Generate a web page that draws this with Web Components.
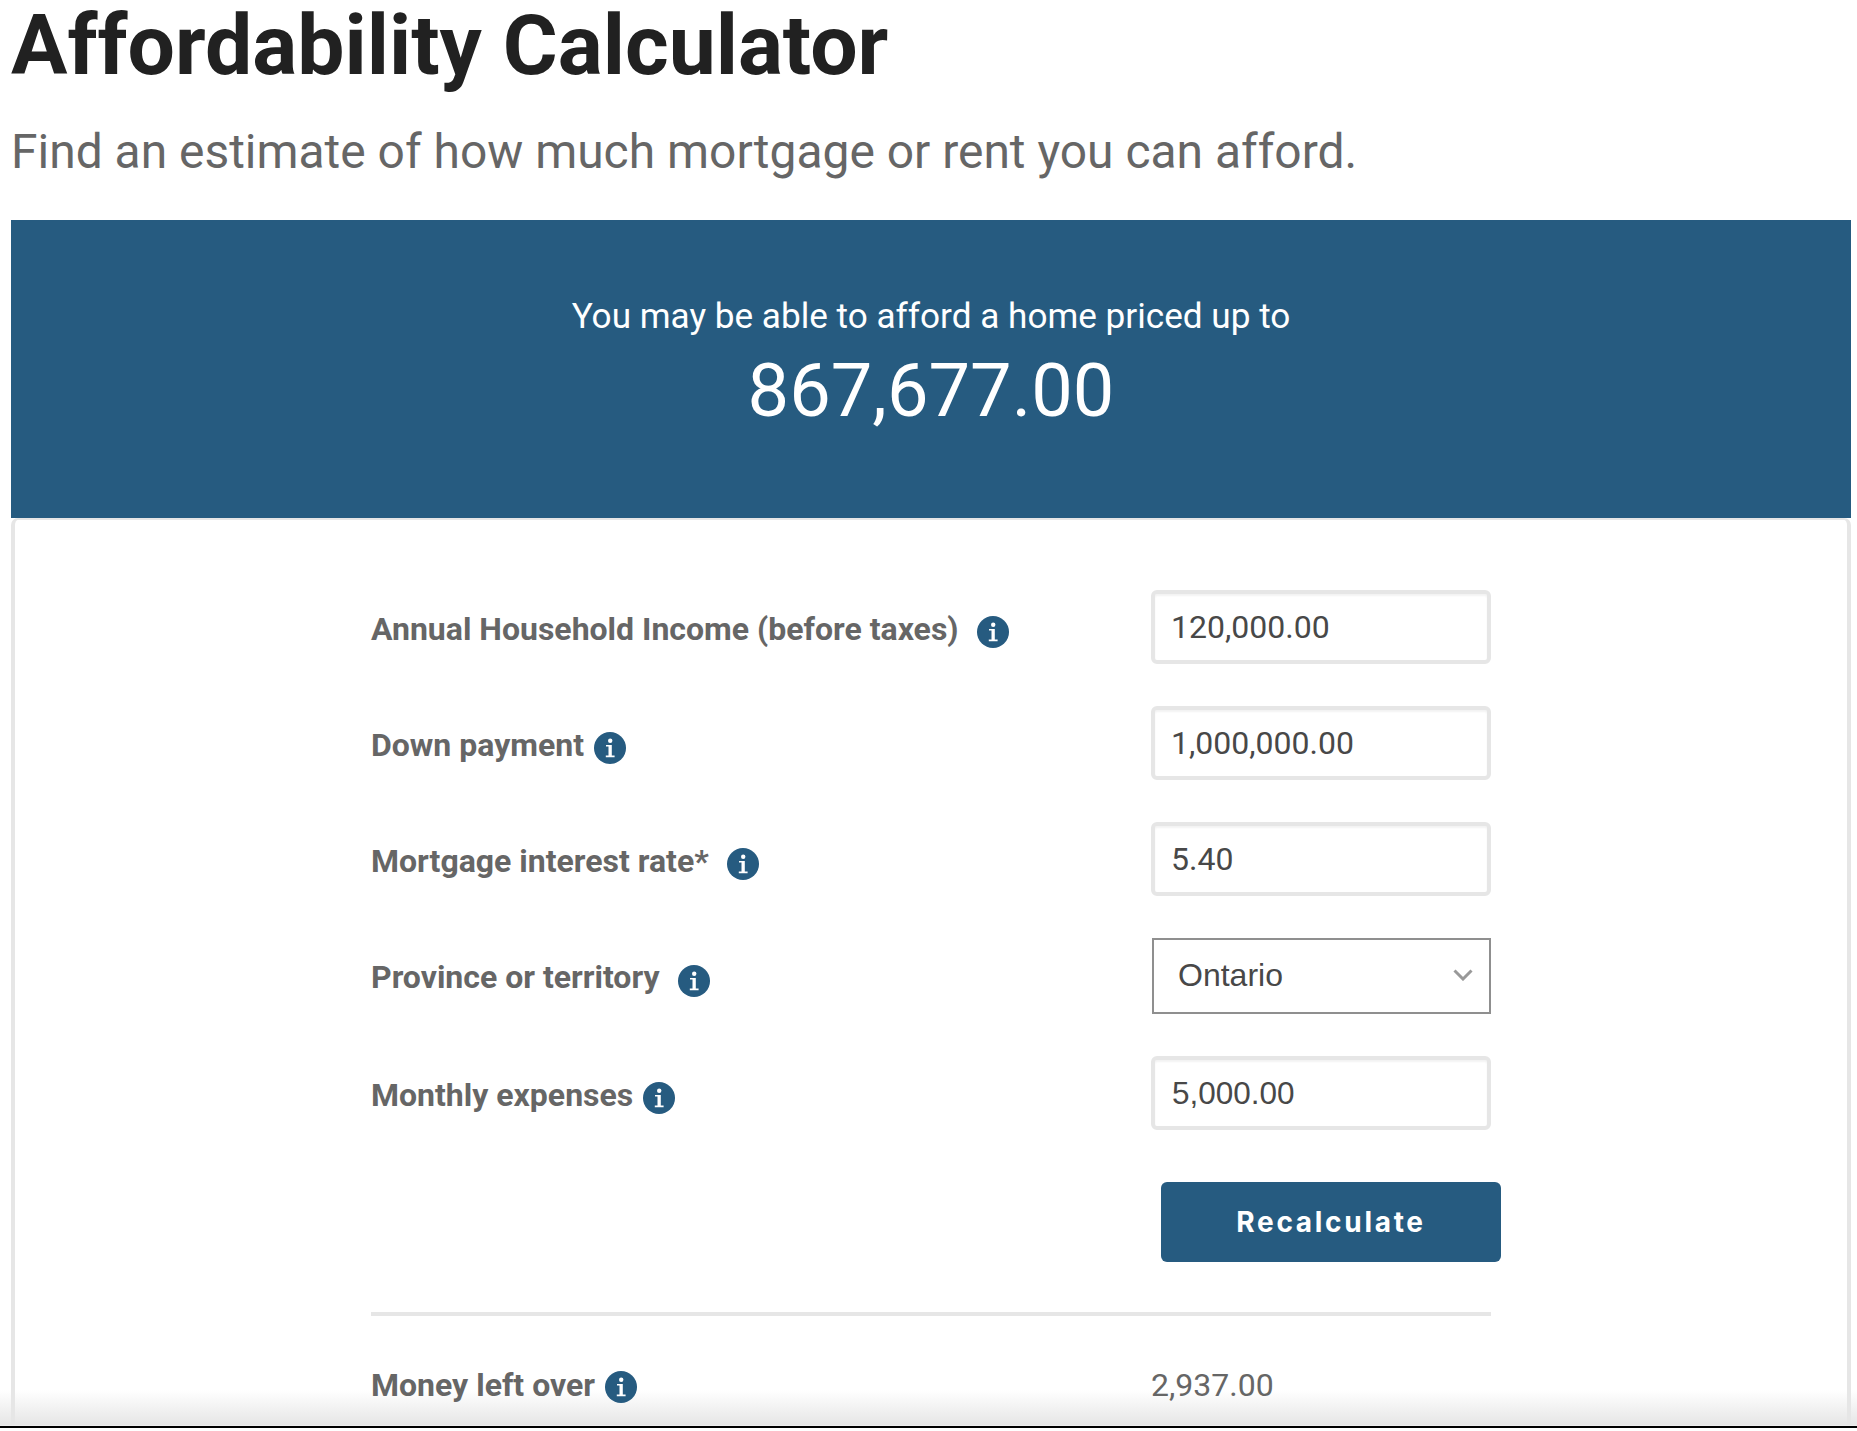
<!DOCTYPE html>
<html lang="en">
<head>
<meta charset="utf-8">
<title>Affordability Calculator</title>
<style>
  html, body { margin: 0; padding: 0; height: 100%; background: #fff; overflow: hidden; }
  body { font-family: Roboto, "Liberation Sans", sans-serif; }
</style>
</head>
<body>
<calc-page>
  <calc-hero slot="hero" caption="You may be able to afford a home priced up to" amount="867,677.00"></calc-hero>
  <calc-row label="Annual Household Income (before taxes)" wide>
    <calc-input value="120,000.00"></calc-input>
  </calc-row>
  <calc-row label="Down payment">
    <calc-input value="1,000,000.00"></calc-input>
  </calc-row>
  <calc-row label="Mortgage interest rate*" wide>
    <calc-input value="5.40"></calc-input>
  </calc-row>
  <calc-row label="Province or territory" wide tall>
    <calc-select value="Ontario"></calc-select>
  </calc-row>
  <calc-row label="Monthly expenses">
    <calc-input value="5,000.00" arial></calc-input>
  </calc-row>
  <calc-button>Recalculate</calc-button>
  <calc-result label="Money left over" value="2,937.00"></calc-result>
</calc-page>

<script>
const BLUE = "#265b80";

customElements.define("calc-page", class CalcPage extends HTMLElement {
  constructor() {
    super();
    this.attachShadow({ mode: "open" });
    this.shadowRoot.innerHTML = `<style>
      :host {
        display: block;
        position: relative;
        height: 1431px;
        overflow: hidden;
        box-sizing: border-box;
        padding: 0 6px 0 11px;
        font-family: Roboto, "Liberation Sans", sans-serif;
      }
      h1 {
        margin: 0;
        height: 92px;
        font-size: 84px;
        line-height: 92px;
        font-weight: 700;
        color: #212121;
      }
      p {
        margin: 0;
        height: 128px;
        font-size: 47.95px;
        line-height: 120px;
        color: #666;
      }
      .card {
        position: relative;
        z-index: 1;
        border: 4px solid #e6e6e6;
        border-top-width: 2px;
        border-bottom: 0;
        border-radius: 7px 7px 0 0;
        padding: 70px 356px 0;
        box-sizing: border-box;
        height: 907px;
      }
      .fade {
        position: absolute;
        left: 0; right: 0; bottom: 3px;
        height: 36px;
        background: linear-gradient(rgba(230,230,230,0), #e6e6e6 97%, #f4f4f4);
        border-bottom: 2px solid #000;
      }
    </style>
    <h1>Affordability Calculator</h1>
    <p>Find an estimate of how much mortgage or rent you can afford.</p>
    <slot name="hero"></slot>
    <div class="fade"></div>
    <div class="card"><slot></slot></div>`;
  }
});

customElements.define("calc-hero", class CalcHero extends HTMLElement {
  constructor() {
    super();
    this.attachShadow({ mode: "open" });
    this.shadowRoot.innerHTML = `<style>
      :host {
        display: flex;
        flex-direction: column;
        align-items: center;
        box-sizing: border-box;
        height: 298px;
        padding-top: 72px;
        background: ${BLUE};
        color: #fff;
      }
      .caption { font-size: 35.15px; line-height: 49px; }
      .amount { font-size: 74px; line-height: 99px; }
    </style>
    <div class="caption">${this.getAttribute("caption")}</div>
    <div class="amount">${this.getAttribute("amount")}</div>`;
  }
});

customElements.define("info-icon", class InfoIcon extends HTMLElement {
  constructor() {
    super();
    this.attachShadow({ mode: "open" });
    this.shadowRoot.innerHTML = `<style>
      :host { display: block; width: 32px; height: 32px; flex: none; }
      svg { display: block; }
    </style>
    <svg width="32" height="32" viewBox="0 0 32 32">
      <circle cx="16" cy="16" r="16" fill="${BLUE}"/>
      <circle cx="16.2" cy="8.7" r="2.2" fill="#fff"/>
      <path d="M12 13h5.8v10.6h2.8v1.6h-8.8v-1.6h2.7v-9H12z" fill="#fff"/>
    </svg>`;
  }
});

customElements.define("calc-row", class CalcRow extends HTMLElement {
  constructor() {
    super();
    this.attachShadow({ mode: "open" });
    const tall = this.hasAttribute("tall");
    this.shadowRoot.innerHTML = `<style>
      :host {
        display: grid;
        grid-template-columns: 780px 340px;
        align-items: center;
        height: ${tall ? 76 : 74}px;
        margin-bottom: 42px;
      }
      .label {
        display: flex;
        align-items: center;
        gap: ${this.hasAttribute("wide") ? 18 : 10}px;
        font-size: 32px;
        font-weight: 700;
        color: #666;
        position: relative;
        top: ${tall ? 1 : 2}px;
      }
      info-icon { position: relative; top: ${tall ? 4 : 3}px; }
    </style>
    <div class="label"><span>${this.getAttribute("label")}</span><info-icon></info-icon></div>
    <slot></slot>`;
  }
});

customElements.define("calc-input", class CalcInput extends HTMLElement {
  constructor() {
    super();
    this.attachShadow({ mode: "open" });
    const arial = this.hasAttribute("arial");
    this.shadowRoot.innerHTML = `<style>
      :host {
        display: flex;
        align-items: center;
        box-sizing: border-box;
        height: 74px;
        padding: 0 16px 0 ${arial ? 17 : 16}px;
        border: 4px solid #e6e6e6;
        border-radius: 6px;
        background: #fff;
        box-shadow: inset 0 2px 2px rgba(0,0,0,.05);
        font-family: ${arial ? '"Liberation Sans"' : "Roboto"}, sans-serif;
        font-size: ${arial ? 31.5 : 32}px;
        color: #484848;
      }
    </style>${this.getAttribute("value")}`;
  }
});

customElements.define("calc-select", class CalcSelect extends HTMLElement {
  constructor() {
    super();
    this.attachShadow({ mode: "open" });
    this.shadowRoot.innerHTML = `<style>
      :host {
        display: flex;
        align-items: center;
        justify-content: space-between;
        box-sizing: border-box;
        height: 76px;
        margin-left: 1px;
        padding: 0 16px 2px 24px;
        border: 2px solid #8f8f8f;
        background: #fff;
        font-family: "Liberation Sans", sans-serif;
        font-size: 32px;
        color: #484848;
      }
      svg { display: block; }
    </style>
    <span>${this.getAttribute("value")}</span>
    <svg width="20" height="12" viewBox="0 0 20 12"><path d="M1.5 1.5L10 10l8.5-8.5" fill="none" stroke="#999" stroke-width="3"/></svg>`;
  }
});

customElements.define("calc-button", class CalcButton extends HTMLElement {
  constructor() {
    super();
    this.attachShadow({ mode: "open" });
    this.shadowRoot.innerHTML = `<style>
      :host {
        display: flex;
        align-items: center;
        justify-content: center;
        box-sizing: border-box;
        width: 340px;
        height: 80px;
        margin: 52px 0 50px 790px;
        border-radius: 6px;
        background: ${BLUE};
        color: #fff;
        font-family: Inter, "Liberation Sans", sans-serif;
        font-weight: 700;
        font-size: 28px;
        letter-spacing: 2.7px;
      }
    </style><slot></slot>`;
  }
});

customElements.define("calc-result", class CalcResult extends HTMLElement {
  constructor() {
    super();
    this.attachShadow({ mode: "open" });
    this.shadowRoot.innerHTML = `<style>
      :host {
        display: grid;
        grid-template-columns: 780px 340px;
        align-items: center;
        border-top: 4px solid #e6e6e6;
        padding-top: 50px;
      }
      .label {
        display: flex;
        align-items: center;
        gap: 10px;
        font-size: 32px;
        font-weight: 700;
        color: #666;
      }
      info-icon { position: relative; top: 2px; }
      .value { font-size: 32px; color: #666; }
    </style>
    <div class="label"><span>${this.getAttribute("label")}</span><info-icon></info-icon></div>
    <div class="value">${this.getAttribute("value")}</div>`;
  }
});
</script>
</body>
</html>
